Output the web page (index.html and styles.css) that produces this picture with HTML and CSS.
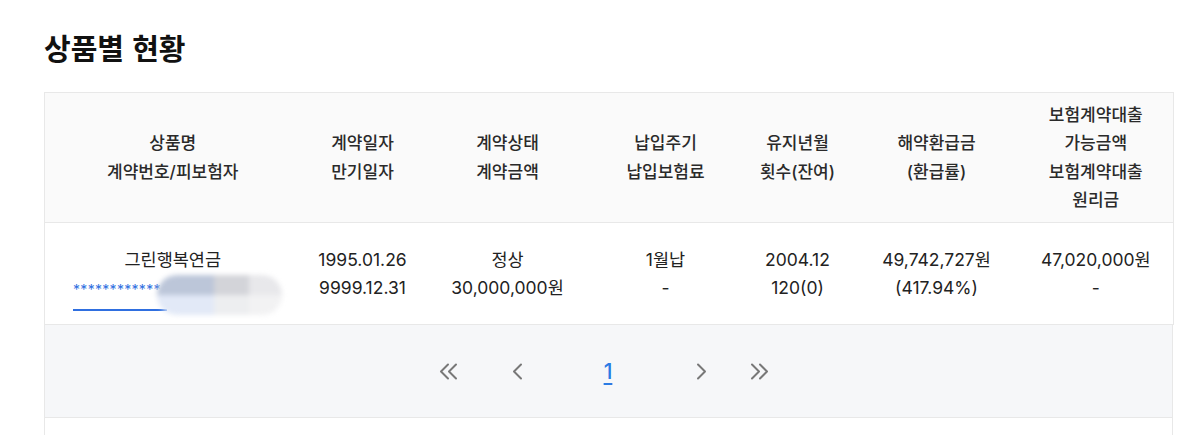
FILE: index.html
```html
<!DOCTYPE html>
<html lang="ko">
<head>
<meta charset="utf-8">
<title>상품별 현황</title>
<link rel="stylesheet" href="styles.css">
</head>
<body>
<main class="page">
  <h2 class="title">상품별 현황</h2>
  <table class="grid">
    <colgroup>
      <col class="c1"><col class="c2"><col class="c3"><col class="c4"><col class="c5"><col class="c6"><col class="c7">
    </colgroup>
    <thead>
      <tr>
        <th>상품명<br>계약번호/피보험자</th>
        <th>계약일자<br>만기일자</th>
        <th>계약상태<br>계약금액</th>
        <th>납입주기<br>납입보험료</th>
        <th>유지년월<br>횟수(잔여)</th>
        <th>해약환급금<br>(환급률)</th>
        <th>보험계약대출<br>가능금액<br>보험계약대출<br>원리금</th>
      </tr>
    </thead>
    <tbody>
      <tr>
        <td class="prod">
          <div>그린행복연금</div>
          <div class="masked"><a href="#" class="contract">************</a><span class="blur"><i class="b1"></i><i class="b2"></i><i class="b3"></i><i class="b4"></i><i class="b5"></i><i class="b6"></i></span></div>
        </td>
        <td>1995.01.26<br>9999.12.31</td>
        <td>정상<br>30,000,000원</td>
        <td>1월납<br>-</td>
        <td>2004.12<br>120(0)</td>
        <td>49,742,727원<br>(417.94%)</td>
        <td>47,020,000원<br>-</td>
      </tr>
    </tbody>
  </table>
  <nav class="pager">
    <a href="#" class="pg" aria-label="처음"><svg width="22" height="17" viewBox="0 0 22 17"><path d="M11 1.5L4 8.5L11 15.5M19 1.5L12 8.5L19 15.5" fill="none" stroke="#787878" stroke-width="2" stroke-linecap="round" stroke-linejoin="round"/></svg></a>
    <a href="#" class="pg prev" aria-label="이전"><svg width="12" height="17" viewBox="0 0 12 17"><path d="M10 1.5L3 8.5L10 15.5" fill="none" stroke="#787878" stroke-width="2" stroke-linecap="round" stroke-linejoin="round"/></svg></a>
    <a href="#" class="pg num">1</a>
    <a href="#" class="pg next" aria-label="다음"><svg width="12" height="17" viewBox="0 0 12 17"><path d="M2 1.5L9 8.5L2 15.5" fill="none" stroke="#787878" stroke-width="2" stroke-linecap="round" stroke-linejoin="round"/></svg></a>
    <a href="#" class="pg" aria-label="마지막"><svg width="22" height="17" viewBox="0 0 22 17"><path d="M3 1.5L10 8.5L3 15.5M11 1.5L18 8.5L11 15.5" fill="none" stroke="#787878" stroke-width="2" stroke-linecap="round" stroke-linejoin="round"/></svg></a>
  </nav>
  <div class="next-box"></div>
</main>
</body>
</html>
```

FILE: styles.css
```css
* { box-sizing: border-box; }
html, body { margin: 0; padding: 0; background: #fff; }
body {
  font-family: Inter, "Noto Sans CJK KR", sans-serif;
  color: #222;
}
.page {
  width: 1129px;
  margin-left: 44px;
  padding-top: 24px;
}
.title {
  margin: 0 0 22px;
  font-family: "Noto Sans CJK KR", sans-serif;
  font-size: 29px;
  line-height: 46px;
  font-weight: 700;
  color: #111;
  letter-spacing: 0;
}
.grid {
  width: 1129px;
  border-collapse: collapse;
  table-layout: fixed;
  border: 1px solid #e8e8e8;
}
.c1 { width: 256px; }
.c2 { width: 124px; }
.c3 { width: 166px; }
.c4 { width: 150px; }
.c5 { width: 114px; }
.c6 { width: 164px; }
.c7 { width: 155px; }
.grid th {
  height: 130px;
  background: #fafafa;
  font-weight: 500;
  font-size: 17px;
  line-height: 28.5px;
  color: #2a2a2a;
  text-align: center;
  vertical-align: middle;
  padding: 0;
  border-bottom: 1px solid #e8e8e8;
}
.grid td {
  height: 102px;
  font-size: 17.5px;
  line-height: 28px;
  color: #222;
  text-align: center;
  vertical-align: middle;
  padding: 0;
  background: #fff;
}
.masked {
  display: flex;
  align-items: center;
  justify-content: flex-start;
  padding-left: 28px;
  height: 28px;
}
.contract {
  display: inline-block;
  color: #2f6fe0;
  text-decoration: none;
  font-size: 14px;
  line-height: 14px;
  letter-spacing: 0.3px;
  border-bottom: 2px solid #2f6fe0;
  padding: 0 6px 12px 0;
  margin-top: 18px;
}
.blur {
  display: grid;
  grid-template-columns: 57px 35px 33px;
  grid-template-rows: 20px 20px;
  width: 125px;
  height: 40px;
  margin-left: -10px;
  margin-top: 14px;
  border-radius: 20px;
  overflow: hidden;
  filter: blur(2.5px);
}
.blur i { display: block; }
.b1 { background: #bcc6d9; }
.b2 { background: #d3d4d9; }
.b3 { background: #e8e8eb; }
.b4 { background: #e2e9f7; }
.b5 { background: #edeef0; }
.b6 { background: #f2f2f3; }
.pager {
  height: 93px;
  background: #f6f7f9;
  border: 1px solid #e8e8e8;
  border-top: 0;
  display: flex;
  align-items: center;
  justify-content: center;
  padding-right: 9px;
}
.pg {
  display: flex;
  align-items: center;
  justify-content: center;
  width: 24px;
  height: 30px;
  text-decoration: none;
}
.prev { margin: 0 67px 0 45px; }
.next { margin: 0 34px 0 70px; }
.num {
  color: #2b7be4;
  font-size: 21px;
  font-weight: 500;
  text-decoration: underline;
  text-underline-offset: 4px;
  text-decoration-thickness: 2px;
}
.next-box {
  height: 40px;
  border-left: 1px solid #e8e8e8;
  border-right: 1px solid #e8e8e8;
}
```
